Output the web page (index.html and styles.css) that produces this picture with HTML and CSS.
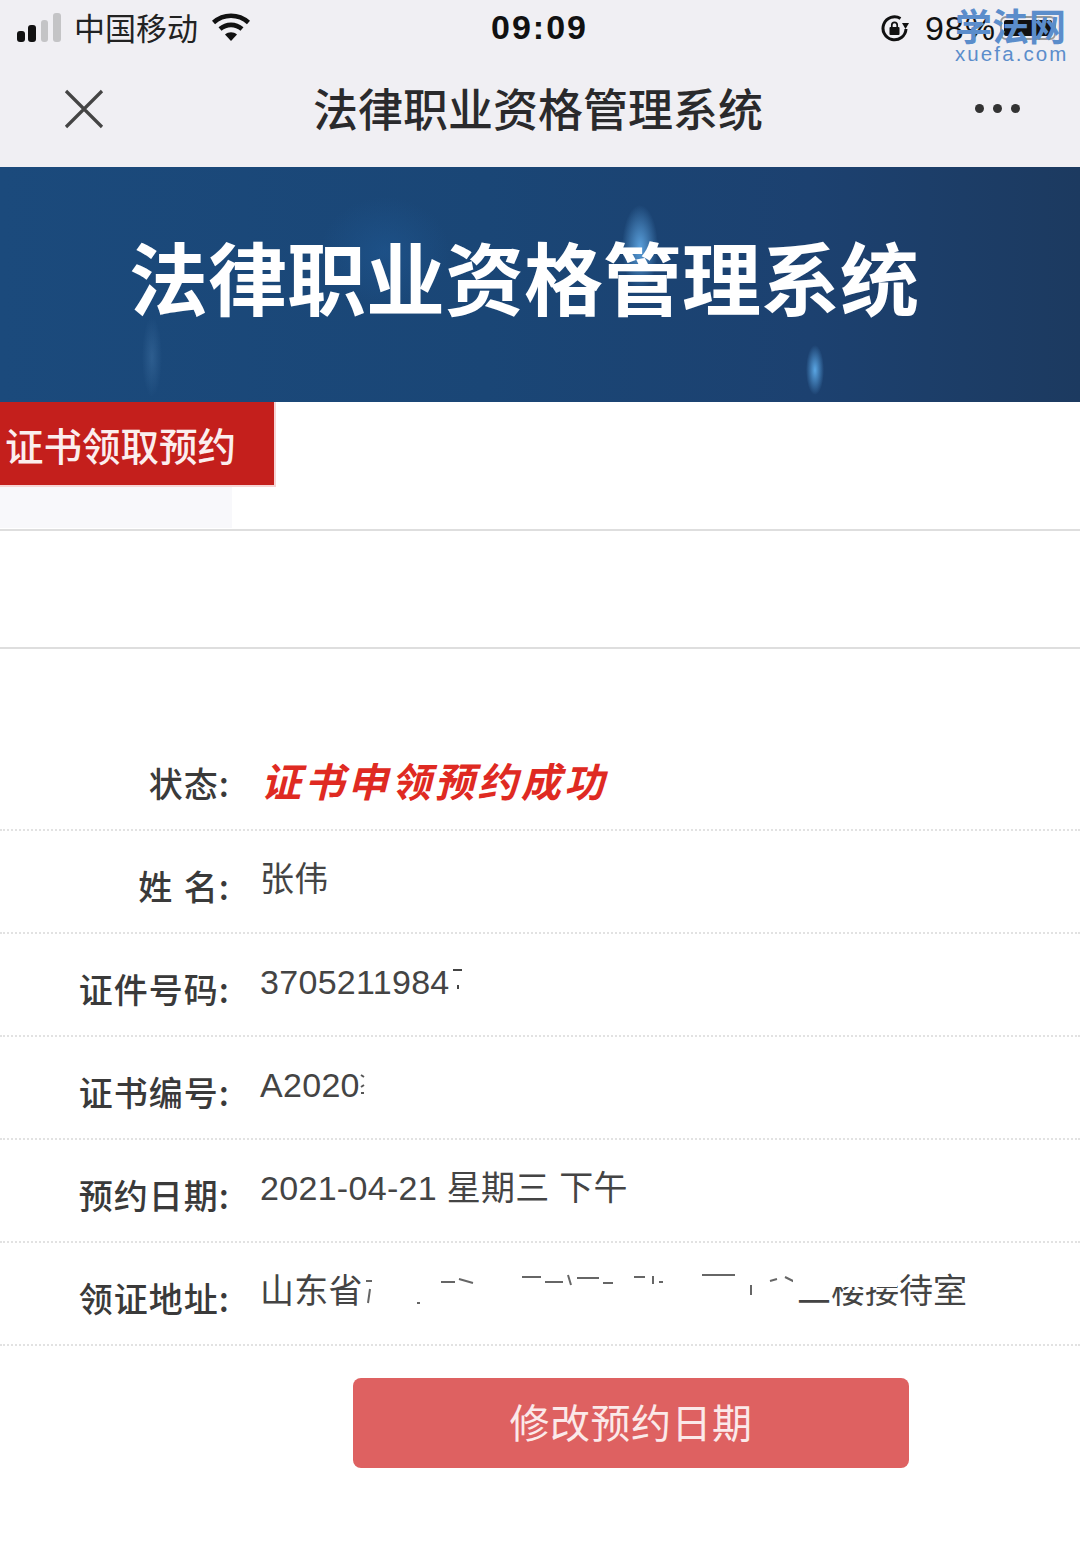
FILE: index.html
```html
<!DOCTYPE html>
<html lang="zh-CN">
<head>
<meta charset="utf-8">
<title>法律职业资格管理系统</title>
<link rel="stylesheet" href="styles.css">
</head>
<body>
<div class="page">
  <header class="chrome">
    <div class="statusbar">
      <div class="status-left">
        <svg class="signal" viewBox="0 0 45 29" width="45" height="29"><rect x="0" y="18" width="8" height="11" rx="3" fill="#111"/><rect x="11" y="12" width="8" height="17" rx="3" fill="#111"/><rect x="24" y="7" width="7" height="22" rx="3" fill="#c4c4c6"/><rect x="36" y="0" width="8" height="29" rx="3" fill="#c4c4c6"/></svg>
        <span class="carrier">中国移动</span>
        <svg class="wifi" viewBox="0 0 38 28" width="38" height="28"><path d="M1.500 9.500C11.500 0.500 26.500 0.500 36.500 9.500" fill="none" stroke="#111" stroke-width="4.600"/><path d="M8 16C14.500 10.500 23.500 10.500 30 16" fill="none" stroke="#111" stroke-width="4.600"/><path d="M13 21.500C16.500 18.500 21.500 18.500 25 21.500L19 28Z" fill="#111"/></svg>
      </div>
      <div class="clock">09:09</div>
      <div class="status-right">
        <svg class="lock" viewBox="0 0 28 28" width="28" height="28"><path d="M25 15A11.500 11.500 0 1 1 19.500 4.500" fill="none" stroke="#111" stroke-width="3"/><path d="M21 9L28 9L24.500 15Z" fill="#111"/><rect x="8.500" y="13" width="10" height="8" rx="1" fill="#111"/><path d="M10.800 13.500V11a2.700 2.700 0 0 1 5.400 0V13.500" fill="none" stroke="#111" stroke-width="1.700"/></svg>
        <span class="battery-pct">98%</span>
        <span class="battery"><span class="battery-fill"></span></span>
      </div>
    </div>
    <nav class="navbar">
      <svg class="close" viewBox="0 0 40 40" width="40" height="40"><path d="M2 2L38 38M38 2L2 38" stroke="#444" stroke-width="3.200" fill="none"/></svg>
      <h1 class="nav-title">法律职业资格管理系统</h1>
      <div class="more"><i></i><i></i><i></i></div>
    </nav>
  </header>

  <section class="banner">
    <span class="glow glow-a"></span>
    <span class="glow glow-b"></span>
    <span class="glow glow-c"></span>
    <span class="glow glow-d"></span>
    <h2 class="banner-title">法律职业资格管理系统</h2>
  </section>

  <section class="tab-panel">
    <div class="tab">证书领取预约</div>
    <div class="tab-under"></div>
  </section>

  <section class="blank-panel"></section>

  <section class="details">
    <div class="row row-status">
      <div class="label">状态:</div>
      <div class="value-status">证书申领预约成功</div>
    </div>
    <div class="row">
      <div class="label">姓 名:</div>
      <div class="value">张伟</div>
    </div>
    <div class="row">
      <div class="label">证件号码:</div>
      <div class="value value-flex">3705211984<svg class="speck" viewBox="0 0 14 44" width="14" height="44"><path d="M3 10L12 10M8 25L8 29" stroke="#444" stroke-width="2" fill="none"/></svg></div>
    </div>
    <div class="row">
      <div class="label">证书编号:</div>
      <div class="value value-flex">A2020<svg class="speck" viewBox="0 0 14 44" width="14" height="44"><path d="M1 12L4 14M1 24L4 22M1 30L4 30" stroke="#555" stroke-width="2" fill="none"/></svg></div>
    </div>
    <div class="row">
      <div class="label">预约日期:</div>
      <div class="value">2021-04-21 星期三 下午</div>
    </div>
    <div class="row">
      <div class="label">领证地址:</div>
      <div class="value value-flex">
        <span>山东省</span>
        <svg class="redacted" viewBox="0 0 434 44" width="434" height="44"><path d="M3 12L9 12M7 20L5 34M54 34L57 34M78 13L92 13M96 10L110 14M159 8L178 8M182 13L200 13M205 6L208 16M214 9L236 9M240 14L250 14M271 8L282 8M290 7L290 15M296 13L300 13M339 6L372 6M388 16L388 26M407 12L414 10M422 8L432 13" stroke="#666" stroke-width="2" fill="none"/></svg>
        <span class="address-end">二楼接待室<span class="erase"></span></span>
      </div>
    </div>
  </section>

  <div class="actions">
    <button class="btn">修改预约日期</button>
  </div>

  <div class="watermark">
    <div class="wm-cn">学法网</div>
    <div class="wm-en">xuefa.com</div>
  </div>
</div>
</body>
</html>
```
FILE: styles.css
```css
* { box-sizing: border-box; }
html, body { margin: 0; padding: 0; background: #fff; }
body { font-family: "Liberation Sans", "Noto Sans CJK SC", sans-serif; color: #333; }
.page { position: relative; width: 1080px; height: 1568px; overflow: hidden; background: #fff; }

.chrome { background: #f0eff3; height: 167px; }
.statusbar { height: 55px; position: relative; display: flex; align-items: center; justify-content: space-between; padding: 0 0 0 17px; }
.status-left { display: flex; align-items: center; }
.carrier { font-size: 31px; line-height: 36px; margin: -2px 0 0 12px; color: #222; font-family: "Noto Sans CJK SC", sans-serif; }
.wifi { margin-left: 14px; margin-top: -2px; }
.clock { position: absolute; left: 491px; top: 8px; font-size: 34px; line-height: 38px; font-weight: 700; letter-spacing: 2px; color: #111; }
.status-right { display: flex; align-items: center; padding-right: 24px; }
.battery-pct { font-size: 34px; line-height: 38px; color: #111; margin-left: 16px; letter-spacing: 1px; }
.battery { display: block; width: 56px; height: 24px; margin-left: 4px; border: 2px solid #999; border-radius: 6px; padding: 2px; }
.battery-fill { display: block; height: 100%; background: #111; border-radius: 2px; }

.navbar { height: 112px; position: relative; display: flex; align-items: flex-start; justify-content: space-between; padding: 34px 60px 0 64px; }
.close { display: block; }
.nav-title { position: absolute; left: 0; right: 4px; top: 25px; margin: 0; text-align: center; font-family: "Noto Sans CJK SC", sans-serif; font-size: 45px; line-height: 56px; font-weight: 500; color: #2a2a2c; }
.more { display: flex; gap: 9px; margin-top: 15px; }
.more i { display: block; width: 9px; height: 9px; border-radius: 50%; background: #333; }

.banner { position: relative; height: 235px; overflow: hidden; background: linear-gradient(90deg, #1b4a7c 0%, #1a4676 45%, #1c4170 75%, #1c3a60 100%); }
.glow { position: absolute; border-radius: 50%; }
.glow-a { left: 622px; top: 38px; width: 36px; height: 85px; background: radial-gradient(closest-side, #5aa0dc, rgba(90,160,220,0)); }
.glow-b { left: 806px; top: 178px; width: 18px; height: 50px; background: radial-gradient(closest-side, #5aa6e4, rgba(90,166,228,0)); }
.glow-c { left: 142px; top: 150px; width: 20px; height: 80px; background: radial-gradient(closest-side, rgba(110,165,215,.22), rgba(110,165,215,0)); }
.glow-d { left: 320px; top: 30px; width: 130px; height: 110px; background: radial-gradient(closest-side, rgba(32,90,150,.5), rgba(32,90,150,0)); }
.banner-title { position: relative; margin: 0; padding: 57px 0 0 129px; font-family: "Noto Sans CJK SC", sans-serif; font-size: 79px; line-height: 104px; font-weight: 700; color: #fff; white-space: nowrap; }

.tab-panel { height: 129px; border-bottom: 2px solid #dedede; }
.tab { width: 276px; height: 85px; padding-left: 5px; background: #c41f1c; border-right: 2px solid #f6d4d4; border-bottom: 2px solid #f6d4d4; font-family: "Noto Sans CJK SC", sans-serif; font-size: 38.500px; line-height: 84px; font-weight: 500; color: #fbeeee; white-space: nowrap; }
.tab-under { width: 232px; height: 41px; background: #f8f8fb; }

.blank-panel { height: 118px; border-bottom: 2px solid #dedede; }

.details { padding-top: 79px; }
.row { height: 103px; display: flex; border-bottom: 2px dotted #e2e2e2; }
.label { width: 230px; flex: none; padding-top: 33px; text-align: right; font-family: "Noto Sans CJK SC", sans-serif; font-size: 34px; line-height: 44px; font-weight: 500; letter-spacing: 1px; word-spacing: 2px; color: #3a3a3a; white-space: pre; }
.value { margin-left: 30px; padding-top: 26px; font-size: 34px; line-height: 44px; letter-spacing: .3px; color: #444; font-family: "Liberation Sans", "Noto Sans CJK SC", sans-serif; white-space: nowrap; }
.value-flex { display: flex; align-items: flex-start; }
.value-status { margin-left: 31px; padding-top: 27px; font-family: "Noto Sans CJK SC", sans-serif; font-size: 40px; line-height: 50px; font-style: italic; font-weight: 700; letter-spacing: 3.300px; color: #df2a22; white-space: nowrap; }
.speck { display: block; flex: none; }
.redacted { display: block; flex: none; }
.address-end { position: relative; letter-spacing: 0; }
.erase { position: absolute; left: -4px; top: 0; width: 104px; height: 18px; background: #fff; }

.actions { padding: 32px 0 0 353px; }
.btn { display: block; width: 556px; height: 90px; padding: 0 0 4px; border: 0; border-radius: 8px; background: #de6161; font-family: "Noto Sans CJK SC", sans-serif; font-size: 40px; font-weight: 400; letter-spacing: .5px; color: #fbe9e9; }

.watermark { position: absolute; left: 955px; top: 4px; width: 125px; color: #5b8dcb; }
.wm-cn { font-family: "Noto Sans CJK SC", sans-serif; font-size: 37px; line-height: 42px; font-weight: 700; white-space: nowrap; }
.wm-en { font-size: 20.500px; line-height: 22px; letter-spacing: 2.100px; margin-top: -3px; white-space: nowrap; }
```
